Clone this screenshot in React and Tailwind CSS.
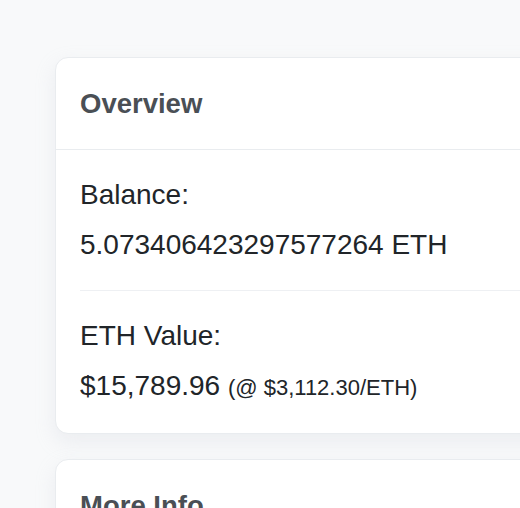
import React from 'react';

const font = { fontFamily: '"Liberation Sans", Arial, Helvetica, sans-serif' };

function Card({ title, children }) {
  return (
    <div className="w-[720px] shrink-0 rounded-[13px] border border-[#e9ecef] bg-white shadow-[0_8px_20px_rgba(189,197,209,0.22)]">
      <div className="border-b border-[#e9ecef] px-6 py-[24px]">
        <h2 className="text-[27.5px] font-bold leading-[43px] text-[#4a4f55]">{title}</h2>
      </div>
      {children}
    </div>
  );
}

export default function App() {
  return (
    <div
      className="h-[508px] w-[520px] overflow-hidden bg-[#f8f9fa] pl-[55px] pt-[57px] text-[#212529]"
      style={font}
    >
      <div className="flex flex-col gap-[25px]">
        <Card title="Overview">
          <div className="p-6 text-[28px] leading-[42px]">
            <div>
              <div>Balance:</div>
              <div className="mt-2">5.073406423297577264 ETH</div>
            </div>
            <hr className="my-6 border-t border-[#eef0f3]" />
            <div>
              <div>ETH Value:</div>
              <div className="mt-2">
                $15,789.96 <span className="text-[22px]">(@ $3,112.30/ETH)</span>
              </div>
            </div>
          </div>
        </Card>
        <Card title="More Info">
          <div className="h-[200px]" />
        </Card>
      </div>
    </div>
  );
}
